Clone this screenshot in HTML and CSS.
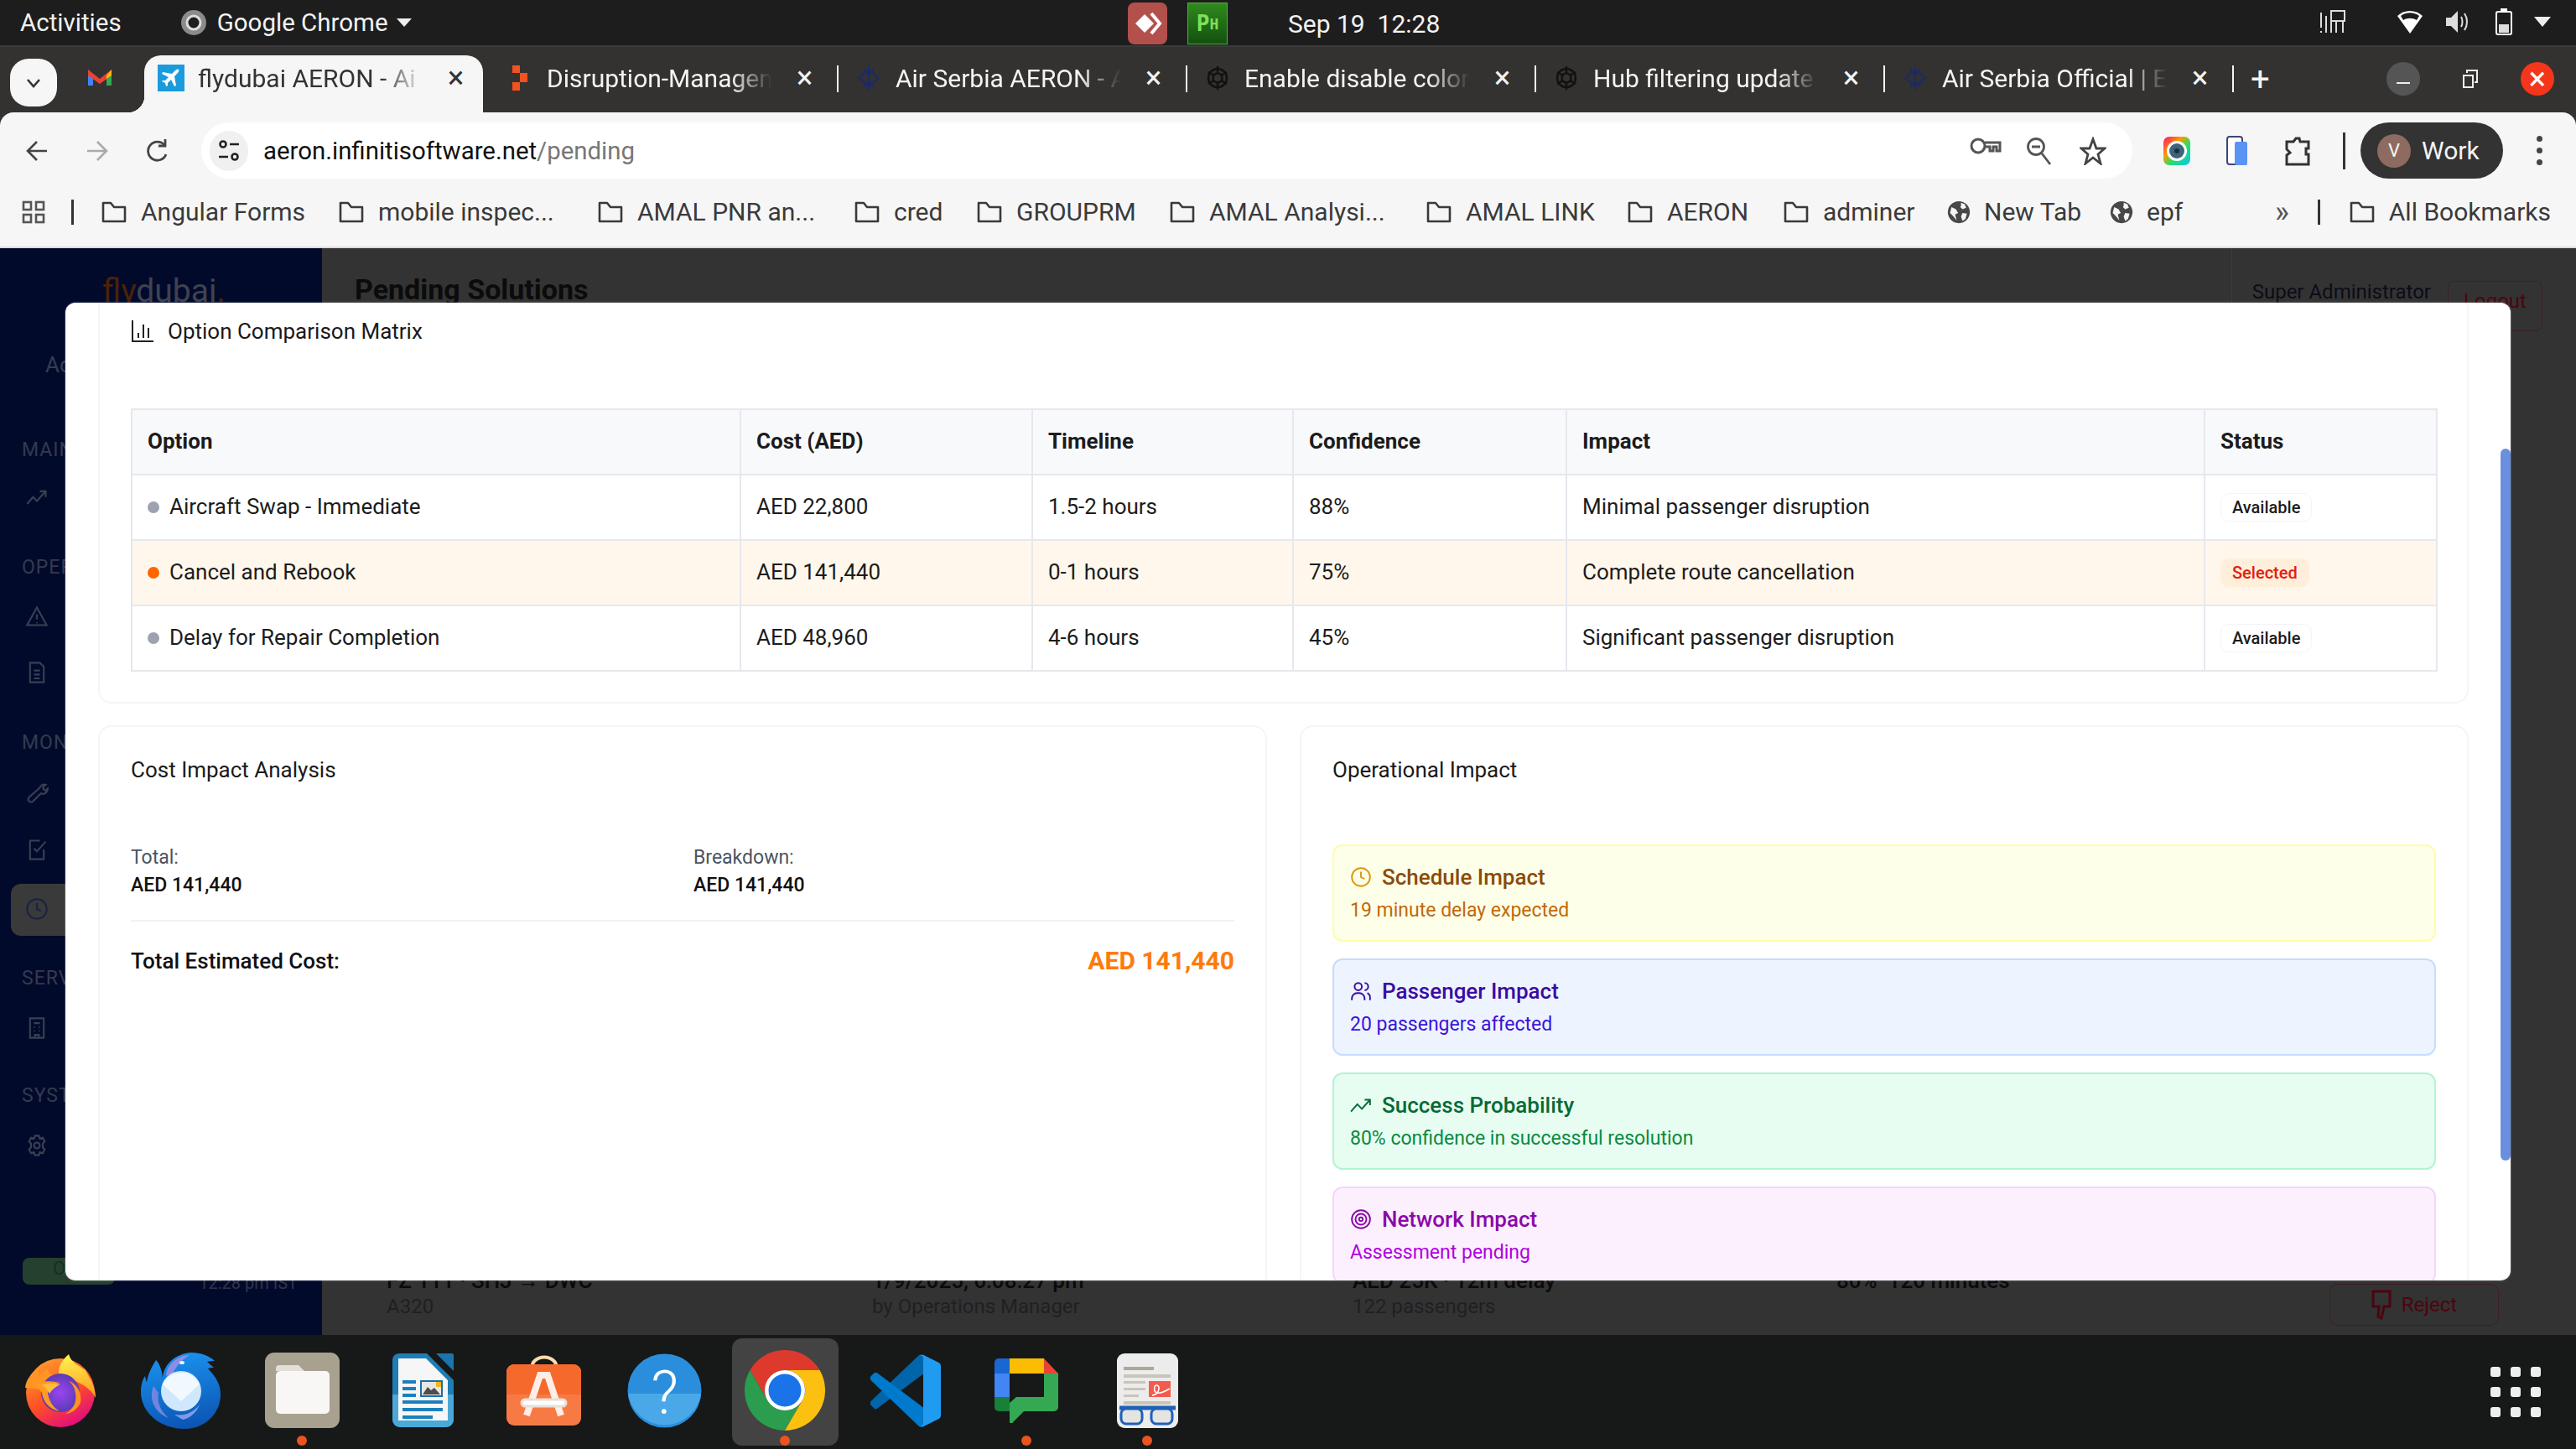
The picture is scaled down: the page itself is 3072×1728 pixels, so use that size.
FILE: index.html
```html
<!DOCTYPE html>
<html lang="en">
<head>
    <meta charset="UTF-8">
    <title>flydubai AERON - Pending Solutions</title>
    <link rel="stylesheet" href="styles.css">
</head>
<body>
    <svg class="sprite" width="0" height="0">
        <symbol id="folder" viewBox="0 0 32 32"><path d="M3 5h9l4 5h13v17H3z" fill="none" stroke="currentColor" stroke-width="2.6" stroke-linejoin="round"/></symbol>
        <symbol id="globe" viewBox="0 0 32 32"><circle cx="16" cy="16" r="15" fill="#484848"/><path d="M6 9l6 3 3 5-4 2 2 8-5-6-4-4zM19 3l5 2 2 5-5 2-3-3 1-2zM21 17l6 1-2 7-4 3-2-6z" fill="#f6f6f6"/></symbol>
    </svg>

    <!-- gnome top bar -->
    <div class="topbar">
        <span class="top-text activities">Activities</span>
        <svg class="app-chrome" width="32" height="32" viewBox="0 0 32 32"><circle cx="16" cy="16" r="15" fill="#8b8b8b"/><circle cx="16" cy="16" r="8" fill="#1d1d1d" stroke="#ddd" stroke-width="3"/></svg>
        <span class="top-text app-name">Google Chrome</span>
        <span class="caret"></span>
        <div class="top-center">
            <div class="tray-anydesk"><svg width="36" height="30" viewBox="0 0 36 30"><path d="M3 15L14 4l11 11-11 11z" fill="#fff"/><path d="M22 3l10 12-10 12" fill="none" stroke="#fff" stroke-width="4"/></svg></div>
            <div class="tray-ph">P<small>H</small></div>
            <span class="top-text clock">Sep 19&nbsp;&nbsp;12:28</span>
        </div>
        <div class="top-right">
            <svg width="32" height="30" viewBox="0 0 32 30" fill="none" stroke="#ddd" stroke-width="2"><path d="M2 4v18M2 26v2M8 8v20M14 8v20M20 14v14M28 14v14"/><rect x="14" y="2" width="16" height="12"/></svg>
            <svg class="wifi" width="32" height="30" viewBox="0 0 32 30"><path d="M16 29L1 8C9 0 23 0 31 8z" fill="#fff"/><path d="M5 8c6-5 16-5 22 0l-3 5c-5-3-11-3-16 0z" fill="#1d1d1d"/></svg>
            <svg class="volume" width="30" height="30" viewBox="0 0 30 30"><path d="M1 10h6l8-8v26l-8-8H1z" fill="#ddd"/><path d="M19 9c2 3 2 9 0 12M23 5c4 6 4 14 0 20" fill="none" stroke="#ddd" stroke-width="2"/></svg>
            <svg width="20" height="32" viewBox="0 0 20 32"><rect x="1" y="4" width="18" height="27" rx="2" fill="none" stroke="#fff" stroke-width="2"/><rect x="6" y="0" width="8" height="4" fill="#fff"/><rect x="4" y="19" width="12" height="10" fill="#ddd"/></svg>
            <span class="caret caret-lg"></span>
        </div>
    </div>

    <!-- chrome tab strip -->
    <div class="tabstrip">
        <div class="tab-search"><svg width="20" height="14" viewBox="0 0 20 14"><path d="M3 3l7 8 7-8" fill="none" stroke="#333" stroke-width="2.6"/></svg></div>
        <div class="pinned-tab"><svg width="30" height="24" viewBox="0 0 30 24"><path d="M1 3v19h6V10z" fill="#4285f4"/><path d="M29 3v19h-6V10z" fill="#34a853"/><path d="M1 3l14 11L29 3v7L15 20 1 10z" fill="#ea4335"/><path d="M23 10l6-7v7l-6 4z" fill="#fbbc04"/></svg></div>
        <div class="tab tab-active">
            <div class="favicon fav-fly"><svg width="24" height="24" viewBox="0 0 24 24"><path d="M21 2c1 1 0 3-2 5l-3 3 2 11-2 1-4-8-4 4v3l-2 1-1-4-4-2 1-1 3 0 4-4-8-4 1-2 11 2 3-3c2-2 4-3 5-2z" fill="#fff"/></svg></div>
            <span class="tab-title">flydubai AERON - Ai</span>
            <span class="tab-x">×</span>
        </div>
        <div class="tab">
            <div class="favicon"><svg width="20" height="32" viewBox="0 0 20 32"><path d="M1 1h9v9H1zM10 10h9v11h-9zM1 21h9v10H1z" fill="#f4511e"/></svg></div>
            <span class="tab-title">Disruption-Managen</span>
            <span class="tab-x">×</span>
        </div>
        <div class="tab">
            <div class="favicon"><svg width="26" height="32" viewBox="0 0 26 32" fill="none" stroke="#1b2a66" stroke-width="2"><path d="M13 1v30M1 16l12 10 12-10M1 16l12-10 12 10M7 5l6 8 6-8M7 27l6-8 6 8"/></svg></div>
            <span class="tab-title">Air Serbia AERON - A</span>
            <span class="tab-x">×</span>
        </div>
        <div class="tab">
            <div class="favicon"><svg width="28" height="32" viewBox="0 0 28 32" fill="none" stroke="#111" stroke-width="2.4"><circle cx="14" cy="16" r="11"/><circle cx="14" cy="16" r="5.5"/><path d="M14 2v8M3 9l7 4M3 23l7-4M14 30v-8M25 23l-7-4M25 9l-7 4"/></svg></div>
            <span class="tab-title">Enable disable color</span>
            <span class="tab-x">×</span>
        </div>
        <div class="tab">
            <div class="favicon"><svg width="28" height="32" viewBox="0 0 28 32" fill="none" stroke="#111" stroke-width="2.4"><circle cx="14" cy="16" r="11"/><circle cx="14" cy="16" r="5.5"/><path d="M14 2v8M3 9l7 4M3 23l7-4M14 30v-8M25 23l-7-4M25 9l-7 4"/></svg></div>
            <span class="tab-title">Hub filtering update</span>
            <span class="tab-x">×</span>
        </div>
        <div class="tab">
            <div class="favicon"><svg width="26" height="32" viewBox="0 0 26 32" fill="none" stroke="#1b2a66" stroke-width="2"><path d="M13 1v30M1 16l12 10 12-10M1 16l12-10 12 10M7 5l6 8 6-8M7 27l6-8 6 8"/></svg></div>
            <span class="tab-title">Air Serbia Official | E</span>
            <span class="tab-x">×</span>
        </div>
        <span class="tab-new">+</span>
        <div class="win-controls">
            <div class="win-btn win-min"><i></i></div>
            <div class="win-btn"><svg width="18" height="24" viewBox="0 0 18 24" fill="none" stroke="#eee" stroke-width="2"><rect x="1" y="8" width="11" height="14"/><path d="M5 5V2h12v14h-3"/></svg></div>
            <div class="win-btn win-close">×</div>
        </div>
    </div>

    <!-- chrome toolbar -->
    <div class="toolbar">
        <div class="nav-btn"><svg width="26" height="28" viewBox="0 0 26 28" fill="none" stroke="#444" stroke-width="2.6"><path d="M25 14H3M13 3L2 14l11 11"/></svg></div>
        <div class="nav-btn"><svg width="26" height="28" viewBox="0 0 26 28" fill="none" stroke="#aaa" stroke-width="2.6"><path d="M1 14h22M13 3l11 11-11 11"/></svg></div>
        <div class="nav-btn"><svg width="28" height="30" viewBox="0 0 28 30" fill="none" stroke="#444" stroke-width="2.8"><path d="M24 19a11 11 0 1 1-2-11"/><path d="M23 1v8h-8" /></svg></div>
        <div class="urlbar">
            <div class="site-info"><svg width="26" height="28" viewBox="0 0 26 28" fill="none" stroke="#222" stroke-width="2.6"><circle cx="6" cy="6" r="3.5"/><path d="M14 6h11M1 21h11"/><circle cx="20" cy="21" r="3.5"/></svg></div>
            <span class="url-text">aeron.infinitisoftware.net<span class="url-path">/pending</span></span>
            <div class="url-icons">
                <div class="url-icon"><svg width="38" height="24" viewBox="0 0 38 24" fill="none" stroke="#555" stroke-width="3"><circle cx="10" cy="11" r="8"/><path d="M18 7h18v10h-4v-5h-4v5h-4v-5h-6"/></svg></div>
                <div class="url-icon"><svg width="30" height="34" viewBox="0 0 30 34" fill="none" stroke="#555" stroke-width="2.8"><circle cx="11" cy="12" r="9.5"/><path d="M18 20l10 13M6 12h10"/></svg></div>
                <div class="url-icon"><svg width="32" height="34" viewBox="0 0 32 34" fill="none" stroke="#444" stroke-width="2.8"><path d="M16 3l4 11h10l-8 7 3 11-9-7-9 7 3-11-8-7h10z"/></svg></div>
            </div>
        </div>
        <div class="ext-btn ext-first"><svg width="32" height="34" viewBox="0 0 32 34"><defs><linearGradient id="rb" x1="0" y1="0" x2="1" y2="1"><stop offset="0" stop-color="#ff0a78"/><stop offset=".35" stop-color="#ff9a00"/><stop offset=".6" stop-color="#22e06a"/><stop offset="1" stop-color="#0bc4f5"/></linearGradient></defs><rect width="32" height="34" rx="7" fill="url(#rb)"/><circle cx="16" cy="17" r="12" fill="#fff"/><circle cx="16" cy="17" r="9" fill="#3d6479"/><circle cx="16" cy="17" r="3" fill="#16303f"/></svg></div>
        <div class="ext-btn"><svg width="26" height="36" viewBox="0 0 26 36"><rect x="1" y="1" width="18" height="33" rx="3" fill="#fff" stroke="#3c4770" stroke-width="2"/><rect x="10" y="7" width="15" height="28" rx="2" fill="#5b93f5"/></svg></div>
        <div class="ext-btn"><svg width="30" height="36" viewBox="0 0 30 36" fill="none" stroke="#333" stroke-width="3"><path d="M2 7h8l3-4h4l1 4h10v8h-3v7h3v12H2V23l4-3-4-4z"/></svg></div>
        <i class="tool-sep"></i>
        <div class="profile"><span class="avatar">V</span><span class="profile-name">Work</span></div>
        <div class="kebab"><i></i><i></i><i></i></div>
    </div>

    <!-- bookmarks bar -->
    <div class="bookmarks">
        <svg class="apps-icon" width="28" height="28" viewBox="0 0 28 28" fill="none" stroke="#555" stroke-width="2.6"><rect x="2" y="2" width="9" height="9"/><rect x="17" y="2" width="9" height="9"/><rect x="2" y="17" width="9" height="9"/><rect x="17" y="17" width="9" height="9"/></svg>
        <i class="bm-sep"></i>
        <div class="bm-list">
            <div class="bm"><svg width="32" height="32"><use href="#folder"/></svg>Angular Forms</div>
            <div class="bm"><svg width="32" height="32"><use href="#folder"/></svg>mobile inspec...</div>
            <div class="bm"><svg width="32" height="32"><use href="#folder"/></svg>AMAL PNR an...</div>
            <div class="bm"><svg width="32" height="32"><use href="#folder"/></svg>cred</div>
            <div class="bm"><svg width="32" height="32"><use href="#folder"/></svg>GROUPRM</div>
            <div class="bm"><svg width="32" height="32"><use href="#folder"/></svg>AMAL Analysi...</div>
            <div class="bm"><svg width="32" height="32"><use href="#folder"/></svg>AMAL LINK</div>
            <div class="bm"><svg width="32" height="32"><use href="#folder"/></svg>AERON</div>
            <div class="bm"><svg width="32" height="32"><use href="#folder"/></svg>adminer</div>
            <div class="bm"><svg width="28" height="32"><use href="#globe"/></svg>New Tab</div>
            <div class="bm"><svg width="28" height="32"><use href="#globe"/></svg>epf</div>
        </div>
        <div class="bm-end">
            <span class="bm-more">»</span>
            <i class="bm-sep"></i>
            <div class="bm"><svg width="32" height="32"><use href="#folder"/></svg>All Bookmarks</div>
        </div>
    </div>

    <!-- app page, dimmed by the modal backdrop -->
    <div class="page">
        <aside class="sidebar">
            <div class="logo"><b>fly</b>dubai<b>.</b></div>
            <div class="side-user">Administrator</div>
            <div class="side-label label-main">MAIN MENU</div>
            <svg class="side-icon" width="28" height="28" viewBox="0 0 24 24"><path d="M2 18l6-7 4 4 8-9M15 5h6v6"/></svg>
            <div class="side-label label-op">OPERATIONS</div>
            <svg class="side-icon" width="28" height="30" viewBox="0 0 24 24"><path d="M12 3l10 18H2zM12 10v5M12 18v1"/></svg>
            <svg class="side-icon icon-gap" width="28" height="32" viewBox="0 0 24 24"><path d="M5 2h10l4 4v16H5zM9 10h6M9 14h6M9 18h6"/></svg>
            <div class="side-label label-mon">MONITORING</div>
            <svg class="side-icon" width="28" height="32" viewBox="0 0 24 24"><path d="M15 7a5 5 0 0 1 6-3l-3 3 1 2 2 1 2-2a5 5 0 0 1-7 5L8 21a2.5 2.5 0 0 1-4-4l9-8z"/></svg>
            <svg class="side-icon icon-gap" width="28" height="32" viewBox="0 0 24 24"><path d="M19 12v10H5V3h10M9 11l3 3 9-10"/></svg>
            <div class="side-active"><svg class="side-icon" width="28" height="32" viewBox="0 0 24 24"><circle cx="12" cy="12" r="10"/><path d="M12 6v6l4 2"/></svg></div>
            <div class="side-label label-serv">SERVICES</div>
            <svg class="side-icon" width="28" height="32" viewBox="0 0 24 24"><path d="M5 2h14v20H5zM9 7h6M9 11h1M14 11h1M9 15h1M14 15h1M10 22v-3h4v3"/></svg>
            <div class="side-label label-sys">SYSTEM</div>
            <svg class="side-icon" width="28" height="32" viewBox="0 0 24 24"><circle cx="12" cy="12" r="3"/><path d="M10 2h4l1 3 3-1 2 4-2 2v4l2 2-2 4-3-1-1 3h-4l-1-3-3 1-2-4 2-2v-4L4 8l2-4 3 1z"/></svg>
            <div class="side-foot">
                <div class="online">Online</div>
                <span class="side-time">12:28 pm IST</span>
            </div>
        </aside>
        <main class="main-bg">
            <header class="page-head">
                <h1>Pending Solutions</h1>
                <div class="user-box">
                    <span>Super Administrator</span>
                    <span class="logout">Logout</span>
                </div>
            </header>
            <div class="bg-row">
                <div class="bg-cell cell-flight"><b>FZ 111 · SHJ → DWC</b><span>A320</span></div>
                <div class="bg-cell cell-date"><b>1/9/2025, 6:08:27 pm</b><span>by Operations Manager</span></div>
                <div class="bg-cell cell-cost"><b>AED 25K · 12m delay</b><span>122 passengers</span></div>
                <div class="bg-cell cell-conf"><b>80% &nbsp;120 minutes</b></div>
                <div class="bg-reject"><svg width="24" height="36" viewBox="0 0 24 36" fill="none" stroke="#4c0510" stroke-width="3"><path d="M2 2h20v18h-7l-3 14-4-2 1-12H2z"/></svg>Reject</div>
            </div>
        </main>

        <!-- solution details modal -->
        <div class="modal">
            <div class="modal-scroll">
                <section class="card card-matrix">
                    <div class="card-title">
                        <svg width="28" height="28" viewBox="0 0 28 28" fill="none" stroke="#222" stroke-width="2"><path d="M2 1v25h25M9 22v-6M15 22V6M21 22V10"/></svg>
                        Option Comparison Matrix
                    </div>
                    <table class="matrix">
                        <colgroup><col class="c1"><col class="c2"><col class="c3"><col class="c4"><col class="c5"><col class="c6"></colgroup>
                        <thead>
                            <tr><th>Option</th><th>Cost (AED)</th><th>Timeline</th><th>Confidence</th><th>Impact</th><th>Status</th></tr>
                        </thead>
                        <tbody>
                            <tr>
                                <td><i class="dot"></i>Aircraft Swap - Immediate</td>
                                <td>AED 22,800</td><td>1.5-2 hours</td><td>88%</td><td>Minimal passenger disruption</td>
                                <td><span class="pill">Available</span></td>
                            </tr>
                            <tr class="row-selected">
                                <td><i class="dot dot-on"></i>Cancel and Rebook</td>
                                <td>AED 141,440</td><td>0-1 hours</td><td>75%</td><td>Complete route cancellation</td>
                                <td><span class="pill pill-selected">Selected</span></td>
                            </tr>
                            <tr>
                                <td><i class="dot"></i>Delay for Repair Completion</td>
                                <td>AED 48,960</td><td>4-6 hours</td><td>45%</td><td>Significant passenger disruption</td>
                                <td><span class="pill">Available</span></td>
                            </tr>
                        </tbody>
                    </table>
                </section>

                <div class="two-col">
                    <section class="card card-cost">
                        <div class="card-title">Cost Impact Analysis</div>
                        <div class="cost-grid">
                            <div><div class="cost-label">Total:</div><div class="cost-value">AED 141,440</div></div>
                            <div><div class="cost-label">Breakdown:</div><div class="cost-value">AED 141,440</div></div>
                        </div>
                        <div class="cost-total"><span>Total Estimated Cost:</span><span class="cost-amount">AED 141,440</span></div>
                    </section>
                    <section class="card card-ops">
                        <div class="card-title">Operational Impact</div>
                        <div class="impact-list">
                            <div class="impact impact-yellow">
                                <div class="impact-head"><svg width="26" height="26" viewBox="0 0 24 24"><circle cx="12" cy="12" r="10"/><path d="M12 6v6l4 2"/></svg>Schedule Impact</div>
                                <div class="impact-text">19 minute delay expected</div>
                            </div>
                            <div class="impact impact-blue">
                                <div class="impact-head"><svg width="26" height="26" viewBox="0 0 24 24"><circle cx="9" cy="7" r="4"/><path d="M2 22v-2a6 6 0 0 1 6-6h2a6 6 0 0 1 6 6v2M16 3a4 4 0 0 1 0 8M19 14a6 6 0 0 1 3 6v2"/></svg>Passenger Impact</div>
                                <div class="impact-text">20 passengers affected</div>
                            </div>
                            <div class="impact impact-green">
                                <div class="impact-head"><svg width="26" height="26" viewBox="0 0 24 24"><path d="M1 19l7-8 5 5 9-10M16 6h6v6"/></svg>Success Probability</div>
                                <div class="impact-text">80% confidence in successful resolution</div>
                            </div>
                            <div class="impact impact-purple">
                                <div class="impact-head"><svg width="26" height="26" viewBox="0 0 24 24"><circle cx="12" cy="12" r="10"/><circle cx="12" cy="12" r="6"/><circle cx="12" cy="12" r="2"/></svg>Network Impact</div>
                                <div class="impact-text">Assessment pending</div>
                            </div>
                        </div>
                    </section>
                </div>
            </div>
            <div class="modal-scrollbar"></div>
        </div>
    </div>

    <!-- ubuntu dock -->
    <div class="dock">
        <div class="dock-item">
            <svg width="84" height="87" viewBox="0 0 84 87">
                <defs>
                    <linearGradient id="ffBody" x1=".1" y1=".1" x2=".6" y2="1"><stop offset="0" stop-color="#ff9a2b"/><stop offset=".55" stop-color="#ff4f24"/><stop offset="1" stop-color="#e3107a"/></linearGradient>
                    <linearGradient id="ffFlame" x1=".5" y1="0" x2=".6" y2="1"><stop offset="0" stop-color="#fff44f"/><stop offset="1" stop-color="#ff9a22"/></linearGradient>
                    <radialGradient id="ffCore"><stop offset="0" stop-color="#9b45f0"/><stop offset="1" stop-color="#5b3bb5"/></radialGradient>
                </defs>
                <circle cx="42" cy="46" r="41" fill="url(#ffBody)"/>
                <path d="M42 30C37 20 42 8 52 0c2 9 13 15 20 19l3 6c6 9 9 18 9 27-6-12-24-24-42-22z" fill="url(#ffFlame)"/>
                <path d="M0 40C1 30 8 22 16 15v11l11-9c1 7 7 9 14 9L20 42z" fill="#ff9524"/>
                <circle cx="42" cy="46" r="23" fill="url(#ffCore)"/>
                <path d="M12 38c9-8 19-6 30-4-7 2-12 5-15 12 1 9 6 17 14 22-13-2-20-13-21-22-2-3-5-6-8-8z" fill="#ff9a22"/>
                <path d="M20 37c7-3 14-2 22-1-6 3-10 6-13 11-2-4-5-8-9-10z" fill="#ffbe3c"/>
                <path d="M52 32c10 3 16 14 14 26-4 8-10 12-18 13 9-5 14-14 12-24-1-7-3-11-8-15z" fill="#ff9224"/>
            </svg>
        </div>
        <div class="dock-item">
            <svg width="96" height="91" viewBox="0 0 96 91">
                <defs><linearGradient id="tbBody" x1=".3" y1="0" x2=".5" y2="1"><stop offset="0" stop-color="#1b93f0"/><stop offset="1" stop-color="#0b55b4"/></linearGradient></defs>
                <path d="M26 32C26 14 42 1 60 0c11 0 22 4 28 10-3 0-6 0-9 1l8 7c-3 0-5 0-7 1 6 7 15 16 15 31 0 23-19 41-43 41C24 91 0 72 0 47c0-8 2-15 5-19l2 8c1-11 8-22 11-27 5 5 8 15 8 23z" fill="url(#tbBody)"/>
                <path d="M30 28C31 14 44 3 58 3c-8 5-16 13-20 22z" fill="#8f8ce6"/>
                <ellipse cx="49" cy="12" rx="3" ry="2" fill="#dff"/>
                <circle cx="48" cy="46" r="24" fill="#cfe8fd"/>
                <path d="M26 38l22 20 22-20c-3-8-12-14-22-14s-19 6-22 14z" fill="#f1f9ff"/>
                <path d="M15 40c-5 12-2 30 18 38-10-8-14-20-12-30z" fill="#6f86de"/>
                <path d="M40 74c12 2 22-2 30-12-3 8-10 16-20 18z" fill="#7f9be8"/>
            </svg>
        </div>
        <div class="dock-item has-dot">
            <svg width="89" height="90" viewBox="0 0 89 90">
                <rect width="89" height="90" rx="11" fill="#a8a190"/>
                <path d="M13 19a4 4 0 0 1 4-4h23l7 7H13z" fill="#e2dfd6"/>
                <rect x="13" y="22" width="64" height="51" rx="5" fill="#f8f7f5"/>
            </svg>
            <i class="run-dot"></i>
        </div>
        <div class="dock-item">
            <svg width="73" height="90" viewBox="0 0 73 90">
                <path d="M52 1h19a2 2 0 0 1 2 2v19z" fill="#1a75ad"/>
                <path d="M8 1h33l32 32v47a9 9 0 0 1-9 9H9a9 9 0 0 1-9-9V9a8 8 0 0 1 8-8z" fill="#1e7db5"/>
                <path d="M0 50h73v30a9 9 0 0 1-9 9H9a9 9 0 0 1-9-9z" fill="#4ba9d8"/>
                <path d="M7 7h33l26 26v48H7z" fill="#f6f6f6"/>
                <path d="M12 33h16v4H12zM12 41h16v4H12zM12 49h16v4H12zM12 57h48v4H12zM12 66h48v4H12zM12 75h36v4H12z" fill="#1b80bd"/>
                <rect x="33" y="33" width="27" height="20" fill="#1b6ea6"/>
                <rect x="35" y="35" width="23" height="16" fill="#e6e6e6"/>
                <path d="M36 50l6-9 4 4 4-3 7 8z" fill="#4c4c4c"/>
                <rect x="52" y="35" width="6" height="6" fill="#eeb91c"/>
            </svg>
        </div>
        <div class="dock-item">
            <svg width="89" height="85" viewBox="0 0 89 85">
                <path d="M30 16c0-18 30-18 30 0" fill="none" stroke="#f8dcae" stroke-width="4"/>
                <rect y="11" width="89" height="73" rx="9" fill="#f77a45"/>
                <path d="M0 20a9 9 0 0 1 9-9h71a9 9 0 0 1 9 9v27H0z" fill="#f56a2c"/>
                <path d="M24 72l16-48h9l16 48" fill="none" stroke="#fdeee6" stroke-width="8"/>
                <line x1="22" y1="57" x2="67" y2="57" stroke="#e9dfd9" stroke-width="11" stroke-linecap="round"/>
                <line x1="22" y1="57" x2="67" y2="57" stroke="#fff" stroke-width="5" stroke-linecap="round"/>
            </svg>
        </div>
        <div class="dock-item">
            <svg width="89" height="89" viewBox="0 0 89 89">
                <circle cx="44.5" cy="44.5" r="44" fill="#2a8edd"/>
                <path d="M1 48h87a44 44 0 0 1-87 0z" fill="#4ba8e8"/>
                <text class="help-mark" x="44.5" y="72" text-anchor="middle">?</text>
            </svg>
        </div>
        <div class="dock-item dock-active has-dot">
            <svg width="96" height="96" viewBox="0 0 96 96">
                <path d="M48 0a48 48 0 0 1 41.6 24H48a24 24 0 0 0-20.800 36L6.400 24A48 48 0 0 1 48 0z" fill="#dd3a2d"/>
                <path d="M6.400 24l20.800 36a24 24 0 0 0 41.600 0L48 96A48 48 0 0 1 6.400 24z" fill="#2a9d4e"/>
                <path d="M89.600 24A48 48 0 0 1 48 96l20.800-36A24 24 0 0 0 48 24z" fill="#fcc110"/>
                <circle cx="48" cy="48" r="24" fill="#fff"/>
                <circle cx="48" cy="48" r="19.500" fill="#1a73e8"/>
            </svg>
            <i class="run-dot"></i>
        </div>
        <div class="dock-item">
            <svg width="84" height="87" viewBox="0 0 100 100" preserveAspectRatio="none">
                <path d="M1 64L68 2a6 6 0 0 1 7-1v26L10 74a4 4 0 0 1-5 0l-4-4a4 4 0 0 1 0-6z" fill="#0065a9"/>
                <path d="M1 36l67 62a6 6 0 0 0 7 1V73L10 26a4 4 0 0 0-5 0l-4 4a4 4 0 0 0 0 6z" fill="#007acc"/>
                <path d="M75 1l21 10a6 6 0 0 1 4 6v66a6 6 0 0 1-4 6L75 99a6 6 0 0 1-5-2c3 2 5 0 5-3V6c0-3-2-5-5-3a6 6 0 0 1 5-2z" fill="#1f9cf0"/>
            </svg>
        </div>
        <div class="dock-item has-dot">
            <svg width="76" height="77" viewBox="0 0 76 77">
                <path d="M18 0v18H0V5a5 5 0 0 1 5-5z" fill="#1967d2"/>
                <rect x="18" width="41" height="18" fill="#fbbc04"/>
                <path d="M59 0l17 18H59z" fill="#ea4335"/>
                <rect y="18" width="18" height="28" fill="#4285f4"/>
                <path d="M0 46h18v17H5a5 5 0 0 1-5-5z" fill="#188038"/>
                <path d="M18 53l8-7h33V18h17v40a5 5 0 0 1-5 5H35L22 76a2 2 0 0 1-4-1z" fill="#34a853"/>
            </svg>
            <i class="run-dot"></i>
        </div>
        <div class="dock-item has-dot">
            <svg width="73" height="89" viewBox="0 0 73 89">
                <rect width="73" height="89" rx="9" fill="#ececec"/>
                <rect x="8" y="16" width="36" height="4" fill="#aea797"/>
                <path d="M8 25h56v4H8zM8 33h26v3H8zM8 41h26v3H8zM8 49h18v3H8zM8 57h56v4H8z" fill="#c9c5b8"/>
                <rect x="38" y="33" width="26" height="19" fill="#f45b4e"/>
                <path d="M42 50c8-1 10-10 6-12-4-1-5 8 0 9s10-2 15-5" fill="none" stroke="#fff" stroke-width="1.500"/>
                <path d="M3 65h67" stroke="#2060b8" stroke-width="5"/>
                <rect x="5" y="66" width="25" height="18" rx="6" fill="#e4e4e0" stroke="#2060b8" stroke-width="3"/>
                <rect x="41" y="66" width="25" height="18" rx="6" fill="#e4e4e0" stroke="#2060b8" stroke-width="3"/>
            </svg>
            <i class="run-dot"></i>
        </div>
        <div class="dock-grid">
            <i></i><i></i><i></i><i></i><i></i><i></i><i></i><i></i><i></i>
        </div>
    </div>
</body>
</html>
```

FILE: styles.css
```css
* {
    box-sizing: border-box;
}

body {
    margin: 0;
    width: 3072px;
    height: 1728px;
    overflow: hidden;
    display: flex;
    flex-direction: column;
    font-family: Roboto, "Noto Sans", sans-serif;
    background-color: #333;
}

.sprite {
    position: absolute;
}

/* top bar */
.topbar {
    height: 56px;
    flex: none;
    display: flex;
    align-items: center;
    background-color: #1d1d1d;
    border-bottom: 2px solid #3b3b3b;
    padding-left: 24px;
    position: relative;
}

.top-text {
    color: #f2f2f2;
    font-size: 29.500px;
}

.app-chrome {
    margin-left: 70px;
}

.app-name {
    margin-left: 12px;
}

.caret {
    width: 0;
    height: 0;
    border-left: 9px solid transparent;
    border-right: 9px solid transparent;
    border-top: 10px solid #eee;
    margin-left: 10px;
}

.top-center {
    position: absolute;
    left: 1345px;
    top: 3px;
    display: flex;
    align-items: center;
    height: 50px;
}

.tray-anydesk {
    width: 47px;
    height: 50px;
    background-color: #b3504c;
    border-radius: 8px;
    display: flex;
    align-items: center;
    justify-content: center;
}

.tray-ph {
    width: 48px;
    height: 50px;
    margin-left: 24px;
    background: linear-gradient(#2f8a1e, #14500f);
    border: 1px solid #4fb23a;
    color: #7fe05a;
    font-family: "DejaVu Sans Mono", monospace;
    font-weight: bold;
    font-size: 26px;
    display: flex;
    align-items: center;
    justify-content: center;
}

.tray-ph small {
    font-size: 18px;
}

.clock {
    margin-left: 72px;
    font-size: 30px;
}

.top-right {
    position: absolute;
    right: 30px;
    top: 10px;
    display: flex;
    align-items: center;
    gap: 26px;
}

.wifi {
    margin-left: 34px;
}

.volume {
    margin-right: 4px;
}

.caret-lg {
    margin-left: 0;
    border-left-width: 10px;
    border-right-width: 10px;
    border-top-width: 12px;
}

/* tabs */
.tabstrip {
    height: 78px;
    flex: none;
    display: flex;
    background-color: #333231;
    padding-top: 10px;
    padding-left: 12px;
}

.tab-search {
    width: 56px;
    height: 57px;
    margin-top: 4px;
    background-color: #f6f6f6;
    border-radius: 22px;
    display: flex;
    align-items: center;
    justify-content: center;
}

.pinned-tab {
    width: 104px;
    height: 56px;
    display: flex;
    align-items: center;
    justify-content: center;
    padding-right: 2px;
    padding-bottom: 4px;
}

.tab {
    width: 416px;
    height: 68px;
    flex: none;
    position: relative;
    display: flex;
    align-items: center;
    padding-bottom: 14px;
    color: #f4f4f4;
    font-size: 30px;
}

.tab::after {
    content: '';
    position: absolute;
    left: 410px;
    top: 12px;
    width: 2px;
    height: 32px;
    background-color: #f4f4f4;
}

.tab-active {
    background-color: #f6f6f6;
    color: #333;
    width: 404px;
    margin-right: 12px;
    border-radius: 20px 20px 0 0;
}

.tab-active::after {
    display: none;
}

.tab-active::before {
    content: '';
    position: absolute;
    left: -20px;
    bottom: 0;
    width: 20px;
    height: 20px;
    background: radial-gradient(circle at 0 0, #333231 20px, #f6f6f6 20.5px);
}

.favicon {
    width: 32px;
    height: 32px;
    margin-left: 16px;
    flex: none;
    display: flex;
    align-items: center;
    justify-content: center;
}

.fav-fly {
    background-color: #1a9bdc;
}

.tab-title {
    width: 274px;
    margin-left: 16px;
    overflow: hidden;
    white-space: nowrap;
    -webkit-mask-image: linear-gradient(90deg, #000 80%, transparent 98%);
    mask-image: linear-gradient(90deg, #000 80%, transparent 98%);
}

.tab-x {
    margin-left: 24px;
    font-size: 36px;
    line-height: 1;
}

.tab-new {
    color: #f4f4f4;
    font-size: 40px;
    line-height: 58px;
    margin-left: 16px;
}

.win-controls {
    position: absolute;
    right: 26px;
    top: 74px;
    display: flex;
    gap: 40px;
    align-items: center;
}

.win-btn {
    width: 40px;
    height: 40px;
    border-radius: 50%;
    display: flex;
    align-items: center;
    justify-content: center;
}

.win-min {
    background-color: #555;
}

.win-min i {
    width: 16px;
    height: 2px;
    margin-top: 10px;
    background-color: #eee;
}

.win-close {
    background-color: #f5361a;
    color: #fff;
    font-size: 38px;
}

/* toolbar */
.toolbar {
    height: 79px;
    flex: none;
    display: flex;
    align-items: flex-start;
    padding-top: 12px;
    padding-left: 8px;
    background-color: #f6f6f6;
    border-radius: 16px 16px 0 0;
}

.nav-btn {
    width: 72px;
    height: 67px;
    display: flex;
    align-items: center;
    justify-content: center;
}

.urlbar {
    width: 2303px;
    height: 67px;
    margin-left: 16px;
    background-color: #fff;
    border-radius: 34px;
    display: flex;
    align-items: center;
    padding-left: 10px;
}

.site-info {
    width: 46px;
    height: 48px;
    border-radius: 24px;
    background-color: #f0f0f0;
    display: flex;
    align-items: center;
    justify-content: center;
}

.url-text {
    margin-left: 18px;
    font-size: 29.400px;
    color: #111;
}

.url-path {
    color: #777;
}

.url-icons {
    margin-left: auto;
    margin-right: 15px;
    display: flex;
}

.url-icon {
    width: 64px;
    display: flex;
    justify-content: center;
}

.ext-btn {
    width: 72px;
    height: 67px;
    display: flex;
    align-items: center;
    justify-content: center;
}

.ext-first {
    margin-left: 17px;
}

.tool-sep {
    width: 3px;
    height: 44px;
    margin: 12px 18px 0;
    background-color: #333;
}

.profile {
    width: 170px;
    height: 67px;
    border-radius: 34px;
    background-color: #333;
    display: flex;
    align-items: center;
    padding-left: 20px;
    color: #f4f4f4;
    font-size: 30px;
}

.avatar {
    width: 40px;
    height: 40px;
    border-radius: 50%;
    background-color: #8e6b60;
    display: flex;
    align-items: center;
    justify-content: center;
    font-size: 22px;
    margin-right: 13px;
}

.kebab {
    height: 67px;
    margin-left: 40px;
    display: flex;
    flex-direction: column;
    align-items: center;
    justify-content: center;
    gap: 7px;
}

.kebab i {
    width: 7px;
    height: 7px;
    border-radius: 50%;
    background-color: #444;
}

/* bookmarks */
.bookmarks {
    height: 83px;
    flex: none;
    display: flex;
    align-items: center;
    padding: 0 30px 2px 26px;
    background-color: #f6f6f6;
    border-bottom: 2px solid #dcdcdc;
}

.bm-sep {
    width: 3px;
    height: 30px;
    background-color: #333;
    flex: none;
}

.apps-icon + .bm-sep {
    margin-left: 31px;
    margin-right: 32px;
}

.bm-list {
    display: grid;
    grid-template-columns: 283px 309px 306px 146px 230px 306px 240px 186px 196px 194px auto;
}

.bm {
    display: flex;
    align-items: center;
    gap: 16px;
    color: #3a3a3a;
    font-size: 30px;
    white-space: nowrap;
}

.bm-end {
    margin-left: auto;
    display: flex;
    align-items: center;
}

.bm-more {
    font-size: 36px;
    color: #555;
    margin-right: 34px;
}

.bm-end .bm-sep {
    margin-right: 34px;
}

/* dimmed page behind the modal */
.page {
    height: 1296px;
    flex: none;
    position: relative;
    display: flex;
    overflow: hidden;
}

.sidebar {
    width: 384px;
    flex: none;
    background-color: #020a2c;
    display: flex;
    flex-direction: column;
    align-items: flex-start;
    padding-left: 30px;
    position: relative;
}

.logo {
    margin: 28px 0 0 92px;
    font-size: 39px;
    line-height: 46px;
    color: #3f4350;
}

.logo b {
    font-weight: 400;
    color: #4a2208;
}

.side-user {
    margin: 50px 0 0 24px;
    color: #363c50;
    font-size: 26px;
    line-height: 30px;
}

.side-label {
    color: #343a4e;
    font-size: 23px;
    line-height: 26px;
    letter-spacing: 1px;
    margin-left: -4px;
}

.label-main { margin-top: 74px; }
.label-op { margin-top: 56px; }
.label-mon { margin-top: 55px; }
.label-serv { margin-top: 38px; }
.label-sys { margin-top: 52px; }

.side-icon {
    fill: none;
    stroke: #3a4052;
    stroke-width: 1.8;
    margin-top: 30px;
}

.icon-gap {
    margin-top: 36px;
}

.side-active {
    margin: 25px 0 0 -17px;
    width: 200px;
    height: 62px;
    border-radius: 12px;
    background-color: #3a3a3a;
    padding-left: 17px;
}

.side-active .side-icon {
    margin-top: 14px;
    stroke: #1a2244;
}

.side-foot {
    position: absolute;
    left: 27px;
    right: 29px;
    top: 1204px;
    display: flex;
    justify-content: space-between;
}

.online {
    width: 110px;
    height: 32px;
    border-radius: 8px;
    background-color: #26402f;
    color: #10331e;
    font-size: 22px;
    padding-left: 36px;
}

.side-time {
    color: #2f3548;
    font-size: 20px;
    margin-top: 18px;
}

.main-bg {
    flex: 1;
    display: flex;
    flex-direction: column;
    justify-content: space-between;
    background-color: #333;
    padding: 0 40px 0 39px;
}

.page-head {
    display: flex;
    justify-content: space-between;
    align-items: flex-start;
}

.page-head h1 {
    margin: 28px 0 0;
    font-size: 34px;
    line-height: 42px;
    color: #0b0b0c;
}

.user-box {
    display: flex;
    gap: 20px;
    color: #0c0c18;
    font-size: 24px;
    padding-top: 38px;
    padding-left: 24px;
    border-left: 1px solid #3c3c3c;
}

.logout {
    width: 113px;
    height: 60px;
    margin-top: 1px;
    border: 1px solid #3d2024;
    border-radius: 8px;
    color: #4c0510;
    text-align: center;
    line-height: 46px;
}

.bg-row {
    height: 80px;
    display: flex;
    position: relative;
}

.bg-cell {
    display: flex;
    flex-direction: column;
    font-size: 24px;
    line-height: 30px;
    color: #1f2024;
    position: absolute;
    top: -1px;
    white-space: nowrap;
}

.bg-cell b {
    color: #0a0a0a;
    font-weight: 500;
    font-size: 26px;
    line-height: 32px;
}

.cell-flight { left: 38px; }
.cell-date { left: 617px; }
.cell-cost { left: 1190px; }
.cell-conf { left: 1767px; }

.bg-reject {
    position: absolute;
    left: 2355px;
    top: 19px;
    width: 202px;
    height: 50px;
    border: 1px solid #3d2024;
    border-radius: 10px;
    display: flex;
    align-items: center;
    justify-content: center;
    gap: 12px;
    color: #4c0510;
    font-size: 24px;
}

/* modal */
.modal {
    position: absolute;
    left: 78px;
    top: 65px;
    width: 2916px;
    height: 1166px;
    background-color: #fff;
    border-radius: 12px;
    box-shadow: 0 0 2px rgba(255, 255, 255, 0.5);
    overflow: hidden;
}

.modal-scroll {
    padding: 0 50px 0 39px;
}

.modal-scrollbar {
    position: absolute;
    right: 0;
    top: 174px;
    width: 12px;
    height: 849px;
    border-radius: 6px;
    background-color: #6b8fdf;
}

.card {
    border: 2px solid #f4f5f7;
    border-radius: 16px;
    padding: 0 37px;
    background-color: #fff;
}

.card-matrix {
    margin-top: -20px;
    padding-top: 34px;
    height: 498px;
    border-top: none;
}

.card-title {
    display: flex;
    align-items: center;
    gap: 16px;
    height: 40px;
    color: #1a1a1a;
    font-size: 26px;
}

.matrix {
    width: 2749px;
    margin-top: 72px;
    border-collapse: collapse;
    table-layout: fixed;
    font-size: 26px;
    color: #1c1c1c;
}

.c1 { width: 726px; }
.c2 { width: 348px; }
.c3 { width: 311px; }
.c4 { width: 326px; }
.c5 { width: 761px; }
.c6 { width: 277px; }

.matrix th,
.matrix td {
    height: 78px;
    border: 2px solid #e6e8ee;
    padding: 0 18px 2px;
    text-align: left;
    white-space: nowrap;
}

.matrix th {
    background-color: #f8f9fb;
    font-weight: 700;
}

.row-selected td {
    background-color: #fff7eb;
}

.dot {
    display: inline-block;
    width: 14px;
    height: 14px;
    border-radius: 50%;
    background-color: #9ca3af;
    margin-right: 12px;
    vertical-align: 1px;
}

.dot-on {
    background-color: #ff6600;
}

.pill {
    display: inline-block;
    height: 34px;
    margin-top: 2px;
    padding: 0 13px;
    border: 1px solid #f3f4f6;
    border-radius: 10px;
    font-size: 20px;
    font-weight: 500;
    line-height: 32px;
    background-color: #fff;
}

.pill-selected {
    background-color: #ffeed9;
    border-color: #ffeed9;
    color: #e2200e;
}

.two-col {
    display: grid;
    grid-template-columns: 1394px 1394px;
    column-gap: 39px;
    margin-top: 26px;
}

.two-col .card {
    height: 900px;
    padding-top: 31px;
}

.cost-grid {
    display: grid;
    grid-template-columns: 671px 1fr;
    margin-top: 70px;
    padding-bottom: 26px;
    border-bottom: 2px solid #f1f2f4;
}

.cost-label {
    color: #4b5563;
    font-size: 23px;
    line-height: 30px;
}

.cost-value {
    margin-top: 3px;
    color: #111;
    font-size: 23px;
    line-height: 30px;
    font-weight: 500;
}

.cost-total {
    display: flex;
    justify-content: space-between;
    align-items: center;
    margin-top: 29px;
    font-size: 26px;
    font-weight: 500;
    color: #111;
}

.cost-amount {
    color: #ff7a0a;
    font-size: 30px;
    font-weight: 700;
}

.impact-list {
    margin-top: 69px;
    display: flex;
    flex-direction: column;
    gap: 20px;
}

.impact {
    height: 116px;
    border: 2px solid;
    border-radius: 12px;
    padding: 19px 19px;
}

.impact-head {
    display: flex;
    align-items: center;
    gap: 12px;
    height: 36px;
    font-size: 26px;
    font-weight: 500;
}

.impact-head svg {
    fill: none;
    stroke: currentColor;
    stroke-width: 1.8;
}

.impact-text {
    margin-top: 7px;
    font-size: 23px;
    line-height: 30px;
}

.impact-yellow {
    background-color: #feffe8;
    border-color: #fffca8;
    color: #c2680a;
}

.impact-yellow .impact-head { color: #8a4b0c; }
.impact-yellow svg { stroke: #d99a0c; }

.impact-blue {
    background-color: #edf4ff;
    border-color: #c6dcff;
    color: #3d12d8;
}

.impact-blue .impact-head { color: #3a0ca3; }

.impact-green {
    background-color: #e7fdf1;
    border-color: #b0f5d2;
    color: #0a8a40;
}

.impact-green .impact-head { color: #056a38; }

.impact-purple {
    background-color: #fcf0ff;
    border-color: #f5d5fc;
    color: #b000e0;
}

.impact-purple .impact-head { color: #8a0aa8; }

/* dock */
.dock {
    height: 136px;
    flex: none;
    background-color: #171818;
    display: flex;
    position: relative;
}

.dock-item {
    width: 127px;
    height: 128px;
    margin: 4px 8.5px 0;
    flex: none;
    border-radius: 12px;
    display: flex;
    align-items: center;
    justify-content: center;
    padding-bottom: 4px;
    position: relative;
}

.dock-active {
    background-color: #434343;
}

.run-dot {
    position: absolute;
    left: 57px;
    bottom: 0;
    width: 12px;
    height: 12px;
    border-radius: 50%;
    background-color: #e95420;
}

.help-mark {
    fill: #fff;
    font-family: Roboto, sans-serif;
    font-size: 72px;
    font-weight: 300;
}

.dock-grid {
    position: absolute;
    left: 2970px;
    top: 38px;
    display: grid;
    grid-template-columns: repeat(3, 12px);
    gap: 12px;
}

.dock-grid i {
    height: 12px;
    border-radius: 3px;
    background-color: #eee;
}
```
